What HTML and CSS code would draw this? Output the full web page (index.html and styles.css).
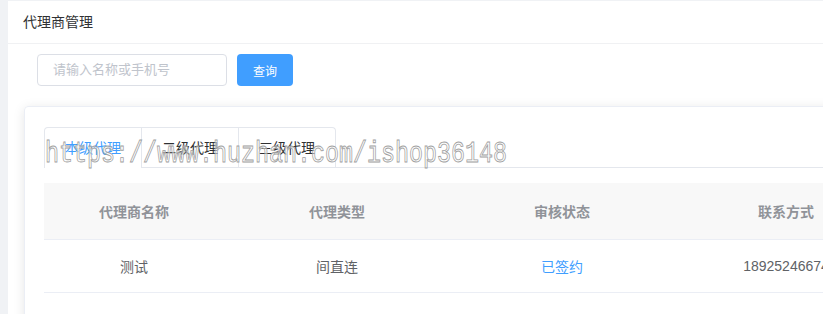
FILE: index.html
```html
<!DOCTYPE html>
<html lang="zh-CN">
<head>
<meta charset="utf-8">
<title>代理商管理</title>
<link rel="stylesheet" href="styles.css">
</head>
<body>
<div class="page">
  <div class="page-header">代理商管理</div>
  <div class="search">
    <div class="input">请输入名称或手机号</div>
    <button class="btn">查询</button>
  </div>
  <div class="card">
    <div class="tabs">
      <div class="tab-nav">
        <div class="tab active">本级代理</div>
        <div class="tab">二级代理</div>
        <div class="tab">三级代理</div>
      </div>
    </div>
    <table class="grid">
      <colgroup>
        <col class="c1"><col class="c2"><col class="c3"><col class="c4"><col class="c5">
      </colgroup>
      <thead>
        <tr><th>代理商名称</th><th>代理类型</th><th>审核状态</th><th>联系方式</th><th>操作</th></tr>
      </thead>
      <tbody>
        <tr><td>测试</td><td>间直连</td><td class="ok">已签约</td><td>18925246674</td><td></td></tr>
      </tbody>
    </table>
  </div>
</div>
<div class="watermark">https://www.huzhan.com/ishop36148</div>
</body>
</html>
```

FILE: styles.css
```css
html, body {
  margin: 0;
  padding: 0;
  overflow: hidden;
  background: #f0f2f5;
  font-family: "Liberation Sans", "Noto Sans CJK SC", sans-serif;
  color: #303133;
}
.page {
  margin: 1px 0 0 8px;
  width: 1200px;
  height: 500px;
  background: #fff;
}
.page-header {
  height: 42px;
  line-height: 42px;
  padding-left: 15px;
  font-size: 14px;
  color: #303133;
  border-bottom: 1px solid #f0f1f3;
}
.search {
  display: flex;
  gap: 10px;
  padding: 10px 0 0 29px;
}
.input {
  box-sizing: border-box;
  width: 190px;
  height: 32px;
  line-height: 30px;
  border: 1px solid #dcdfe6;
  border-radius: 4px;
  padding-left: 15px;
  font-size: 13px;
  color: #c0c4cc;
}
.btn {
  width: 56px;
  height: 32px;
  border: none;
  border-radius: 4px;
  background: #409eff;
  color: #fff;
  font-family: inherit;
  font-size: 12px;
  padding: 0;
}
.card {
  margin: 20px 0 0 16px;
  border: 1px solid #ebeef5;
  border-radius: 4px;
  box-shadow: 0 2px 12px 0 rgba(0, 0, 0, 0.1);
  padding: 20px 19px 80px;
}
.tabs {
  border-bottom: 1px solid #e4e7ed;
  margin-bottom: 15px;
}
.tab-nav {
  display: inline-flex;
  border: 1px solid #e4e7ed;
  border-bottom: none;
  border-radius: 4px 4px 0 0;
  margin-bottom: -1px;
}
.tab {
  height: 39px;
  line-height: 40px;
  padding: 0 20px;
  font-size: 14px;
  color: #303133;
  border-left: 1px solid #e4e7ed;
  border-bottom: 1px solid #e4e7ed;
}
.tab:first-child { border-left: none; }
.tab.active {
  color: #409eff;
  border-bottom-color: #fff;
}
.grid {
  border-collapse: collapse;
  table-layout: fixed;
  width: 1080px;
}
.c1 { width: 180px; }
.c2 { width: 226px; }
.c3 { width: 224px; }
.c4 { width: 224px; }
.grid th {
  height: 56px;
  padding: 0;
  background: #f8f8f8;
  color: #909399;
  font-size: 14px;
  font-weight: bold;
  text-align: center;
  border-bottom: 1px solid #ebeef5;
}
.grid td {
  height: 52px;
  padding: 0;
  color: #606266;
  font-size: 14px;
  text-align: center;
  border-bottom: 1px solid #ebeef5;
}
.grid td.ok { color: #409eff; }
.watermark {
  position: absolute;
  left: 45px;
  top: 136px;
  font-family: "Liberation Mono", monospace;
  font-size: 23.33px;
  line-height: 28px;
  color: rgba(255, 255, 255, 0.5);
  -webkit-text-stroke: 0.7px #a0a0a0;
  transform: scaleY(1.3);
  transform-origin: left top;
  pointer-events: none;
  white-space: nowrap;
}
```
